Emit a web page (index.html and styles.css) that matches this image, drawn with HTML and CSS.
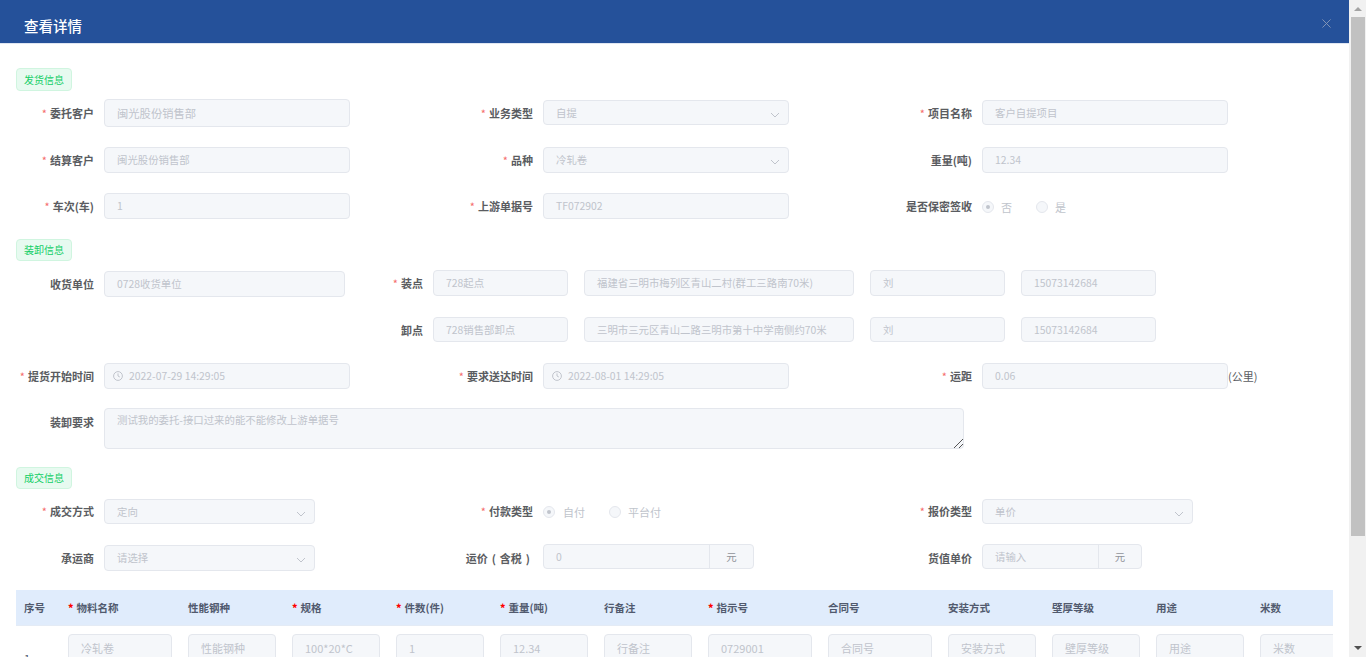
FILE: index.html
```html
<!DOCTYPE html>
<html lang="zh-CN">
<head>
<meta charset="utf-8">
<title>查看详情</title>
<link rel="stylesheet" href="styles.css">
</head>
<body>
<div class="app">
  <main class="dialog">
    <header class="dialog-head">
      <h1 class="dialog-title">查看详情</h1>
      <svg class="close" width="9" height="9" viewBox="0 0 10 10"><path d="M.5.5l9 9M9.5.5l-9 9"/></svg>
    </header>
    <div class="dialog-body">
      <div class="tag">发货信息</div>
      <div class="row row-first">
        <div class="item"><div class="label"><span class="star">*</span>委托客户</div><div class="field h28 big">闽光股份销售部</div></div>
        <div class="item"><div class="label"><span class="star">*</span>业务类型</div><div class="field select lift">自提<svg class="chev" width="10" height="6" viewBox="0 0 10 6"><path d="M1 1l4 4 4-4"/></svg></div></div>
        <div class="item"><div class="label"><span class="star">*</span>项目名称</div><div class="field lift">客户自提项目</div></div>
      </div>
      <div class="row gap20">
        <div class="item"><div class="label"><span class="star">*</span>结算客户</div><div class="field h26">闽光股份销售部</div></div>
        <div class="item"><div class="label"><span class="star">*</span>品种</div><div class="field select h26">冷轧卷<svg class="chev" width="10" height="6" viewBox="0 0 10 6"><path d="M1 1l4 4 4-4"/></svg></div></div>
        <div class="item"><div class="label">重量(吨)</div><div class="field h26">12.34</div></div>
      </div>
      <div class="row gap20">
        <div class="item"><div class="label"><span class="star">*</span>车次(车)</div><div class="field h26">1</div></div>
        <div class="item"><div class="label"><span class="star">*</span>上游单据号</div><div class="field h26">TF072902</div></div>
        <div class="item"><div class="label">是否保密签收</div>
          <div class="radios radios-a"><span class="radio on"></span><span class="radio-text">否</span><span class="radio"></span><span class="radio-text">是</span></div>
        </div>
      </div>

      <div class="tag tag-s gap20">装卸信息</div>
      <div class="load gap9">
        <div class="item load-left"><div class="label">收货单位</div><div class="field h26 w241">0728收货单位</div></div>
        <div class="load-right">
          <div class="stop"><div class="label short"><span class="star">*</span>装点</div>
            <div class="field h26 w135">728起点</div><div class="field h26 w270">福建省三明市梅列区青山二村(群工三路南70米)</div><div class="field h26 w135">刘</div><div class="field h26 w135">15073142684</div></div>
          <div class="stop stop-b"><div class="label short">卸点</div>
            <div class="field w135">728销售部卸点</div><div class="field w270">三明市三元区青山二路三明市第十中学南侧约70米</div><div class="field w135">刘</div><div class="field w135">15073142684</div></div>
        </div>
      </div>
      <div class="row gap21">
        <div class="item"><div class="label"><span class="star">*</span>提货开始时间</div><div class="field h26 date"><svg class="clock" width="10" height="10" viewBox="0 0 10 10"><circle cx="5" cy="5" r="4.4"/><path d="M5 2.4V5l1.8 1"/></svg>2022-07-29 14:29:05</div></div>
        <div class="item"><div class="label"><span class="star">*</span>要求送达时间</div><div class="field h26 date"><svg class="clock" width="10" height="10" viewBox="0 0 10 10"><circle cx="5" cy="5" r="4.4"/><path d="M5 2.4V5l1.8 1"/></svg>2022-08-01 14:29:05</div></div>
        <div class="item"><div class="label"><span class="star">*</span>运距</div><div class="field h26">0.06</div><span class="unit">(公里)</span></div>
      </div>
      <div class="item area-row">
        <div class="label area-label">装卸要求</div>
        <div class="field area">测试我的委托-接口过来的能不能修改上游单据号<svg class="grip" width="9" height="9" viewBox="0 0 9 9"><path d="M0 9l9-9M5 9l4-4"/></svg></div>
      </div>

      <div class="tag tag-s gap18">成交信息</div>
      <div class="row gap9 row-25">
        <div class="item"><div class="label"><span class="star">*</span>成交方式</div><div class="field select w211">定向<svg class="chev" width="10" height="6" viewBox="0 0 10 6"><path d="M1 1l4 4 4-4"/></svg></div></div>
        <div class="item"><div class="label"><span class="star">*</span>付款类型</div>
          <div class="radios radios-b"><span class="radio on"></span><span class="radio-text">自付</span><span class="radio"></span><span class="radio-text">平台付</span></div>
        </div>
        <div class="item"><div class="label"><span class="star">*</span>报价类型</div><div class="field select w211">单价<svg class="chev" width="10" height="6" viewBox="0 0 10 6"><path d="M1 1l4 4 4-4"/></svg></div></div>
      </div>
      <div class="row gap22 row-top">
        <div class="item"><div class="label">承运商</div><div class="field select w211 h26">请选择<svg class="chev" width="10" height="6" viewBox="0 0 10 6"><path d="M1 1l4 4 4-4"/></svg></div></div>
        <div class="item"><div class="label label-tax down">运价 ( 含税 )</div><div class="group w211"><div class="group-main">0</div><div class="group-add">元</div></div></div>
        <div class="item"><div class="label down">货值单价</div><div class="group w160"><div class="group-main">请输入</div><div class="group-add add-s">元</div></div></div>
      </div>

      <div class="table-wrap">
        <table class="grid">
          <colgroup>
            <col class="c44"><col class="c120"><col class="c104"><col class="c104"><col class="c104"><col class="c104"><col class="c104"><col class="c120"><col class="c120"><col class="c104"><col class="c104"><col class="c104"><col class="c104">
          </colgroup>
          <thead>
            <tr>
              <th>序号</th><th><b class="req">*</b>物料名称</th><th>性能钢种</th><th><b class="req">*</b>规格</th><th><b class="req">*</b>件数(件)</th><th><b class="req">*</b>重量(吨)</th><th>行备注</th><th><b class="req">*</b>指示号</th><th>合同号</th><th>安装方式</th><th>壁厚等级</th><th>用途</th><th>米数</th>
            </tr>
          </thead>
          <tbody>
            <tr>
              <td class="idx">1</td>
              <td><div class="field cell">冷轧卷</div></td><td><div class="field cell">性能钢种</div></td><td><div class="field cell">100*20*C</div></td><td><div class="field cell">1</div></td><td><div class="field cell">12.34</div></td><td><div class="field cell">行备注</div></td><td><div class="field cell">0729001</div></td><td><div class="field cell">合同号</div></td><td><div class="field cell">安装方式</div></td><td><div class="field cell">壁厚等级</div></td><td><div class="field cell">用途</div></td><td><div class="field cell">米数</div></td>
            </tr>
          </tbody>
        </table>
      </div>
    </div>
  </main>
  <aside class="scrollbar">
    <div class="arrow arrow-up"></div>
    <div class="thumb"></div>
    <div class="track"></div>
    <div class="arrow arrow-down"></div>
  </aside>
</div>
</body>
</html>
```

FILE: styles.css
```css
* { box-sizing: border-box; }
html, body { margin: 0; height: 100%; overflow: hidden; background: #fff; }
body { font-family: "Noto Sans CJK SC", "Liberation Sans", sans-serif; font-size: 11px; color: #5a5c61; }

.app { display: flex; width: 1366px; height: 657px; overflow: hidden; }
.dialog { width: 1349px; height: 657px; overflow: hidden; background: #fff; flex: none; }

.dialog-head { height: 44px; background: #25519a; border-bottom: 1px solid #dfe6f2; display: flex; align-items: center; justify-content: space-between; padding: 8px 18px 0 24px; }
.dialog-title { margin: 0; font-size: 14.5px; font-weight: 500; color: #fff; line-height: 20px; }
.close { margin-bottom: 5px; fill: none; stroke: #8a9ab8; stroke-width: 1; }

.dialog-body { padding: 24px 16px 0 16px; }

.tag { width: 56px; height: 23px; line-height: 21px; text-align: center; font-size: 10px; color: #13ce66; background: #e7faf0; border: 1px solid #d0f5e0; border-radius: 4px; }
.tag-s { height: 22px; line-height: 20px; }

.row { display: grid; grid-template-columns: repeat(3, 439px); height: 26px; align-items: center; }
.row-first { height: 28px; margin-top: 8px; }
.row-25 { height: 25px; }
.row-top { align-items: start; }
.gap9 { margin-top: 9px; }
.gap18 { margin-top: 18px; }
.gap20 { margin-top: 20px; }
.gap21 { margin-top: 21px; }
.gap22 { margin-top: 22px; }

.item { display: flex; align-items: center; }
.label { width: 78px; margin-right: 10px; flex: none; text-align: right; font-weight: 700; white-space: nowrap; line-height: 16px; }
.label.short { width: 40px; }
.label-tax { padding-right: 3px; word-spacing: 1.5px; }
.down { margin-top: 2px; }
.star { color: #f56c6c; margin-right: 3px; font-weight: 400; }

.field { position: relative; flex: none; width: 246px; height: 25px; line-height: 23px; padding: 0 12px; background: #f5f7fa; border: 1px solid #e4e7ed; border-radius: 4px; font-size: 10.4px; color: #c0c4cc; white-space: nowrap; overflow: hidden; }
.big { font-size: 11.3px; }
.lift { margin-bottom: 1px; }
.h26 { height: 26px; line-height: 24px; }
.h28 { height: 28px; line-height: 26px; }
.w135 { width: 135px; }
.w211 { width: 211px; }
.w241 { width: 241px; }
.w270 { width: 270px; }

.chev { position: absolute; right: 8px; top: 11px; fill: none; stroke: #c0c4cc; stroke-width: 1; }
.date { display: flex; align-items: center; padding-left: 8px; }
.clock { margin-right: 6px; fill: none; stroke: #c0c4cc; stroke-width: 1; }
.unit { white-space: nowrap; }

.radios { display: flex; align-items: center; height: 26px; padding-top: 2px; }
.radio { position: relative; width: 12px; height: 12px; border-radius: 50%; border: 1px solid #e4e7ed; background: #f5f7fa; flex: none; }
.radio.on::after { content: ""; position: absolute; left: 3px; top: 3px; width: 4px; height: 4px; border-radius: 50%; background: #c0c4cc; }
.radio-text { color: #c0c4cc; margin-left: 7px; }
.radio-text:nth-child(2) { margin-right: 24px; }
.radios-b .radio-text:nth-child(2) { margin-left: 8px; }

.load { display: flex; height: 72px; }
.load-left { width: 329px; height: 26px; margin-top: 1px; align-items: center; flex: none; }
.load-right { margin-left: 38px; }
.stop { display: flex; align-items: center; gap: 16px; height: 26px; }
.stop .label { margin-right: -6px; }
.stop-b { margin-top: 21px; height: 25px; }

.area-row { margin-top: 19px; align-items: flex-start; }
.area-label { margin-top: 6px; }
.area { width: 860px; height: 41px; line-height: 22px; }
.grip { position: absolute; right: 0; bottom: 0; fill: none; stroke: #555; stroke-width: 1; }

.group { display: flex; height: 25px; margin-top: -1px; border: 1px solid #e4e7ed; border-radius: 4px; background: #f5f7fa; color: #c0c4cc; font-size: 10.4px; line-height: 23px; }
.group-main { flex: 1; padding: 0 12px; }
.group-add { width: 44px; flex: none; text-align: center; border-left: 1px solid #e4e7ed; color: #909399; }
.add-s { width: 43px; }
.w160 { width: 160px; }

.table-wrap { width: 1317px; margin-top: 19px; overflow: hidden; }
.grid { width: 1340px; table-layout: fixed; border-collapse: separate; border-spacing: 0; }
.c44 { width: 44px; }
.c104 { width: 104px; }
.c120 { width: 120px; }
.grid th { height: 36px; padding: 0 8px; background: #e0ecfc; border-bottom: 1px solid #e4ebf5; text-align: left; font-size: 10.5px; font-weight: 700; color: #515a6e; white-space: nowrap; }
.req { color: #f00; margin-right: 3px; }
.grid td { padding: 8px; vertical-align: top; height: 64px; }
.grid td.idx { vertical-align: middle; font-size: 11px; padding-top: 0; padding-bottom: 0; color: #515a6e; }
.field.cell { width: 100%; height: 28px; line-height: 26px; font-size: 11px; }

.scrollbar { width: 17px; height: 657px; background: #f1f1f1; display: flex; flex-direction: column; flex: none; padding-left: 2px; }
.arrow { width: 14px; height: 17px; flex: none; position: relative; }
.arrow::after { content: ""; position: absolute; left: 3px; border-left: 4px solid transparent; border-right: 4px solid transparent; }
.arrow-up::after { top: 7px; border-bottom: 4px solid #a3a3a3; }
.arrow-down::after { bottom: 7px; border-top: 4px solid #505050; }
.thumb { width: 14px; height: 519px; background: #c1c1c1; flex: none; }
.track { flex: 1; }
```
